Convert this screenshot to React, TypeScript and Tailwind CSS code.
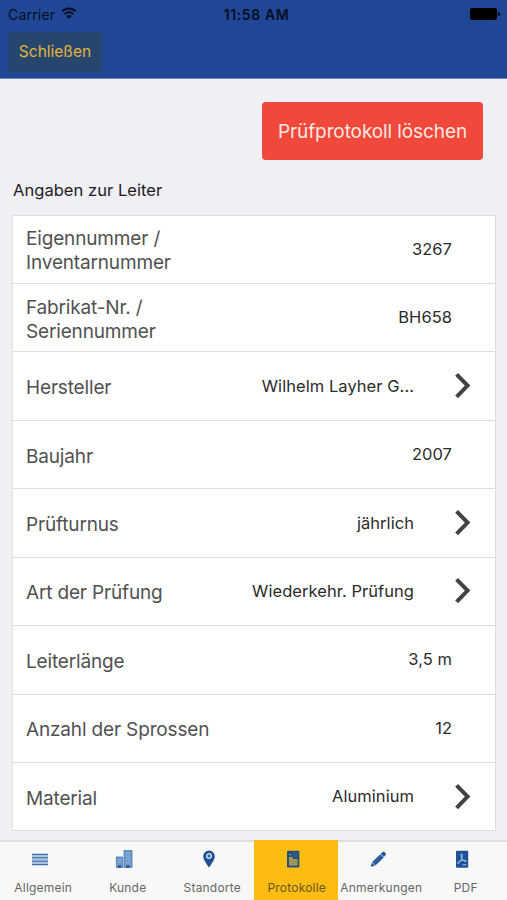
import type { ReactNode } from "react";

type Row = { label: ReactNode; value: string; link?: boolean };

const rows: Row[] = [
  { label: <>Eigennummer /<br />Inventarnummer</>, value: "3267" },
  { label: <>Fabrikat-Nr. /<br />Seriennummer</>, value: "BH658" },
  { label: "Hersteller", value: "Wilhelm Layher G...", link: true },
  { label: "Baujahr", value: "2007" },
  { label: "Prüfturnus", value: "jährlich", link: true },
  { label: "Art der Prüfung", value: "Wiederkehr. Prüfung", link: true },
  { label: "Leiterlänge", value: "3,5 m" },
  { label: "Anzahl der Sprossen", value: "12" },
  { label: "Material", value: "Aluminium", link: true },
];

function Chevron() {
  return (
    <svg className="h-7 w-4 shrink-0" viewBox="0 0 16 28" fill="none" stroke="#424242" strokeWidth="4">
      <path d="M1.600 2.300 12.600 13.600 1.600 24.900" strokeLinejoin="miter" />
    </svg>
  );
}

function StatusBar() {
  return (
    <div className="grid h-7 grid-cols-3 items-center text-[#050d22]">
      <div className="flex items-center gap-1.5 pl-2 text-[14px] tracking-[0.200px]">
        <span>Carrier</span>
        <svg className="-mt-0.5 h-3 w-4" viewBox="0 0 16 12" fill="none" stroke="currentColor" strokeWidth="2">
          <path d="M1.2 4.4a9.6 9.6 0 0 1 13.6 0M3.7 7a6.1 6.1 0 0 1 8.6 0" />
          <path d="M8 11.8 5.4 9.2a3.7 3.7 0 0 1 5.2 0Z" fill="currentColor" stroke="none" />
        </svg>
      </div>
      <div className="pl-[6px] text-center text-[14px] font-semibold tracking-[0.600px]">11:58 AM</div>
      <div className="flex items-center justify-end gap-px pr-[7px]">
        <span className="h-[12px] w-[27px] rounded-[2px] bg-black" />
        <span className="h-1 w-[2px] rounded-r-full bg-black" />
      </div>
    </div>
  );
}

function LinesIcon() {
  return (
    <svg className="h-[18px] w-[18px]" viewBox="0 0 18 18">
      <path fill="#a9c3e2" d="M1 4h16v11H1z" />
      <path stroke="#3c6ba8" strokeWidth="1.1" d="M1 4.4h16M1 7.8h16M1 11.2h16M1 14.6h16" />
    </svg>
  );
}

function BuildingsIcon() {
  return (
    <svg className="h-[18px] w-[18px]" viewBox="0 0 18 18">
      <path fill="#6f9ccd" stroke="#4474ad" strokeWidth=".8" d="M9 .6h8v17H9zM1.4 7h6.2v10.6H1.4z" />
      <path stroke="#93b6dc" strokeWidth="1" strokeDasharray="1.3 1" d="M3 9.3h3.5M3 12h3.5M11 3.5h4.5M11 6.5h4.5M11 9.5h4.5M11 12.5h4.5" />
      <path fill="#173c72" d="M3.2 15.400h2.600v2.200H3.200zM11.500 15.400h3v2.200h-3z" />
    </svg>
  );
}

function PinIcon() {
  return (
    <svg className="h-[18px] w-[18px]" viewBox="0 0 18 18">
      <path fill="#1e4f90" d="M9 .5a5.8 5.8 0 0 0-5.8 5.8C3.200 10.200 9 17.500 9 17.500s5.800-7.300 5.800-11.200A5.800 5.800 0 0 0 9 .5Z" />
      <circle cx="9" cy="6" r="2.300" fill="#2f64a5" stroke="#dce8f5" strokeWidth="1.300" />
    </svg>
  );
}

function ProtocolIcon() {
  return (
    <svg className="h-[18px] w-[18px]" viewBox="0 0 18 18">
      <rect x="3" y=".8" width="12.400" height="16.800" rx="1.300" fill="#245080" />
      <path fill="#a59b52" d="M5 7h3.500v2H13.500v6.500H5z" />
      <path stroke="#a59b52" strokeWidth="1" d="M5 4.500h2.500" />
      <path stroke="#416a91" strokeWidth="1" d="M9.500 3.500h4M9.500 6h4" />
      <path stroke="#8b8850" strokeWidth=".6" d="M5 11.200h8.500M5 13.300h8.500" />
    </svg>
  );
}

function PencilIcon() {
  return (
    <svg className="h-[18px] w-[18px]" viewBox="0 0 18 18">
      <path fill="#24579a" d="m1.700 16.800 1.100-4.200 3.200 3.100zM3.200 12.100l8.100-7.900 3.300 3.300-8.100 7.900zM11.700 3.800l1.700-1.600c.8-.7 1.700-.6 2.400.1l.6.6c.7.7.700 1.600 0 2.300L14.900 7z" />
      <path stroke="#4f7fb6" strokeWidth=".6" d="m5 12.500 7.200-7" />
    </svg>
  );
}

function PdfIcon() {
  return (
    <svg className="h-[18px] w-[18px]" viewBox="0 0 18 18" fill="none">
      <rect x="3" y=".7" width="12.200" height="17" rx=".8" fill="#1f5299" />
      <path stroke="#b4cde9" strokeWidth=".9" d="M8.500 3.800c1.200 0 .8 3.200-.3 5.600-1 2.200-2.700 4.600-3.500 4.100-.9-.6 2.100-2.700 4.500-3.100 2.200-.4 4.400.1 4.200.8-.3.9-3.400-.6-4.500-2.400C8 7 7.700 3.800 8.500 3.800Z" />
      <path stroke="#a8c4e4" strokeWidth="1" d="M9.500 14.800h4" />
    </svg>
  );
}

const tabs = [
  { name: "Allgemein", icon: <LinesIcon /> },
  { name: "Kunde", icon: <BuildingsIcon /> },
  { name: "Standorte", icon: <PinIcon /> },
  { name: "Protokolle", icon: <ProtocolIcon />, active: true },
  { name: "Anmerkungen", icon: <PencilIcon /> },
  { name: "PDF", icon: <PdfIcon /> },
];

export default function App() {
  return (
    <div className="flex h-[900px] w-[507px] flex-col overflow-hidden bg-[#efeff4] font-['Inter',sans-serif]">
      <header className="h-[79px] shrink-0 border-b border-[#6583ba] bg-[#204795]">
        <StatusBar />
        <button className="mt-1 ml-2 flex h-10 w-[94px] items-center justify-center bg-[#26466e] pb-px text-[15.500px] text-[#e2b43b]">
          Schließen
        </button>
      </header>

      <main className="flex h-[761px] shrink-0 flex-col">
        <div className="flex justify-end pt-[23px] pr-[24px]">
          <button className="h-[58px] w-[221px] rounded-[4px] bg-[#f0483a] pt-[2px] text-[19px] tracking-[-0.100px] whitespace-nowrap text-[#ffe9e4]">
            Prüfprotokoll löschen
          </button>
        </div>
        <h2 className="mt-[18px] ml-[13px] text-[16.500px] leading-6 tracking-[0.050px] text-[#1c1c1e]">
          Angaben zur Leiter
        </h2>
        <div className="mt-[12.500px] mr-[11px] ml-[12px] border border-[#dedee0] bg-white">
          {rows.map((row, i) => (
            <div
              key={i}
              className="flex h-[68.450px] items-center justify-between border-b border-[#dfdfe1] pl-[13px] last:h-[67.450px] last:border-b-0"
            >
              <div className="pt-[4px] text-[19px] leading-6 tracking-[-0.160px] whitespace-nowrap text-[#515151]">
                {row.label}
              </div>
              <div className={row.link ? "flex items-center pr-[24px]" : "flex items-center pr-[43px]"}>
                <span className="text-[16.500px] tracking-[0.050px] whitespace-nowrap text-[#2b2b2b]">{row.value}</span>
                {row.link && (
                  <span className="ml-[41px] flex">
                    <Chevron />
                  </span>
                )}
              </div>
            </div>
          ))}
        </div>
      </main>

      <nav className="grid h-[60px] shrink-0 grid-cols-6 border-t-2 border-[#dfdfe2] bg-[#f8f8f8]">
        {tabs.map((tab) => (
          <div
            key={tab.name}
            className={
              tab.active
                ? "-mt-0.5 flex flex-col items-center bg-[#fdbc11] pt-[10px] text-[#66581f]"
                : "flex flex-col items-center pt-[8px] text-[#666]"
            }
          >
            <span className="pr-[5px]">{tab.icon}</span>
            <span className="mt-[12px] pl-[2px] text-[12px] leading-4 tracking-[0.200px] whitespace-nowrap">
              {tab.name}
            </span>
          </div>
        ))}
      </nav>
    </div>
  );
}
